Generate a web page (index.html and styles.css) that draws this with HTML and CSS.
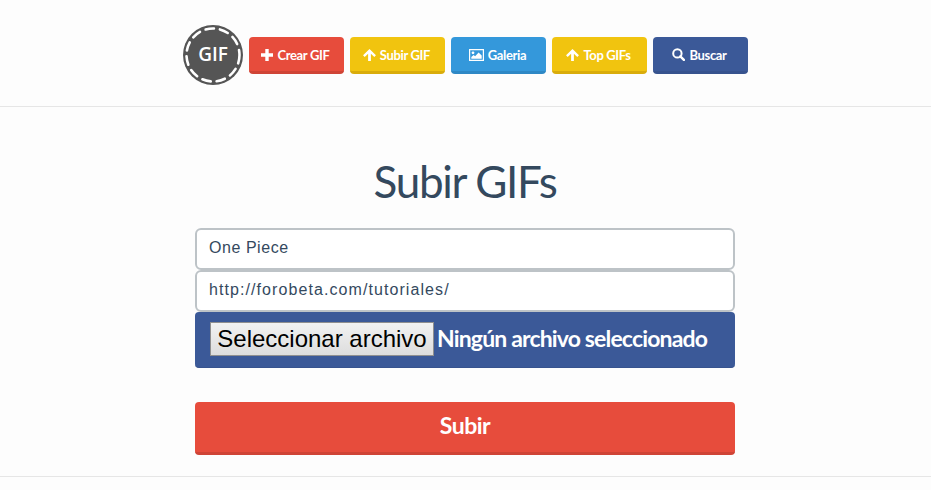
FILE: index.html
```html
<!DOCTYPE html>
<html lang="es">
<head>
<meta charset="utf-8">
<title>Subir GIFs</title>
<link rel="stylesheet" href="styles.css">
</head>
<body>
<header class="site-header">
  <svg class="logo" width="60" height="60" viewBox="0 0 60 60" role="img" aria-label="GIF">
    <circle cx="30" cy="30" r="30" fill="#555"/>
    <circle cx="30" cy="30" r="26.5" fill="none" stroke="#fff" stroke-width="2.6" stroke-linecap="round" stroke-dasharray="8.5 6.07"/>
    <text x="30" y="36" text-anchor="middle" class="logo-text">GIF</text>
  </svg>
  <nav class="nav">
    <a class="btn btn-red" href="#"><svg class="ico" viewBox="0 0 12 12"><path d="M4.3 0h3.4v4.3H12v3.4H7.700V12H4.300V7.700H0V4.300h4.300z"/></svg>Crear GIF</a>
    <a class="btn btn-yellow" href="#"><svg class="ico ico-up" viewBox="0 0 14 13"><path d="M7 0l7 6.800-1.800 1.800-3.700-3.500V13h-3V5.100L1.800 8.600 0 6.800z"/></svg>Subir GIF</a>
    <a class="btn btn-blue" href="#"><svg class="ico ico-pic" viewBox="0 0 15 12"><path fill-rule="evenodd" d="M0 0h15v12H0zM1.200 1.200v9.600h12.600V1.200z"/><circle cx="4" cy="3.800" r="1.400"/><path d="M2.300 9.800V8l2.300-2 1.500 1.300L9.600 3.500l3.100 3v3.300z"/></svg>Galeria</a>
    <a class="btn btn-yellow" href="#"><svg class="ico ico-up" viewBox="0 0 14 13"><path d="M7 0l7 6.800-1.800 1.800-3.700-3.500V13h-3V5.100L1.800 8.600 0 6.800z"/></svg>Top GIFs</a>
    <a class="btn btn-navy" href="#"><svg class="ico ico-search" viewBox="0 0 13 13"><circle cx="5.400" cy="5.400" r="4.200" fill="none" stroke="#fff" stroke-width="2"/><path d="M8.300 8.300l3.600 3.600" stroke="#fff" stroke-width="2.400" stroke-linecap="round"/></svg>Buscar</a>
  </nav>
</header>
<main class="content">
  <h1 class="title">Subir GIFs</h1>
  <form class="upload-form">
    <input class="field" type="text" value="One Piece">
    <input class="field field-url" type="text" value="http://forobeta.com/tutoriales/">
    <div class="file-row">
      <button class="file-btn" type="button">Seleccionar archivo</button>
      <span class="file-label">Ningún archivo seleccionado</span>
    </div>
    <button class="submit" type="button">Subir</button>
  </form>
</main>
<div class="footer-line"></div>
</body>
</html>
```
FILE: styles.css
```css
* { box-sizing: border-box; }
html, body { margin: 0; padding: 0; }
body {
  background: #fdfdfd;
  font-family: "Lato", "Open Sans", sans-serif;
  color: #34495e;
  height: 490px;
  overflow: hidden;
}
.site-header {
  height: 107px;
  border-bottom: 1px solid #e6e6e6;
  display: flex;
  justify-content: center;
  align-items: flex-start;
  gap: 6px;
  padding-top: 25px;
}
.logo { display: block; }
.logo-text {
  font-family: "Open Sans", sans-serif;
  font-size: 19px;
  font-weight: 600;
  fill: #fff;
}
.nav { display: flex; gap: 6px; margin-top: 12px; }
.btn {
  width: 95px;
  height: 37px;
  border-radius: 4px;
  border-bottom: 3px solid;
  display: flex;
  align-items: center;
  justify-content: center;
  gap: 4px;
  color: #fff;
  font-size: 13px;
  font-weight: 700;
  letter-spacing: -0.35px;
  text-decoration: none;
  padding-top: 1px;
  padding-right: 2px;
}
.btn-red { background: #e74c3c; border-color: #cf4436; }
.btn-yellow { background: #f1c40f; border-color: #d9ac0b; }
.btn-blue { background: #3498db; border-color: #2e88c5; }
.btn-navy { background: #3b5998; border-color: #37538e; }
.ico { width: 12px; height: 12px; fill: #fff; flex: none; }
.ico-up { width: 13px; height: 12px; }
.ico-pic { width: 15px; height: 12px; }
.ico-search { width: 13px; height: 13px; }
.content { display: flex; flex-direction: column; align-items: center; padding-right: 1px; }
.title {
  margin: 48px 0 0;
  height: 73px;
  font-size: 44px;
  line-height: 52px;
  font-weight: 400;
  letter-spacing: -1.3px;
  color: #34495e;
}
.upload-form { width: 540px; display: flex; flex-direction: column; }
.field {
  display: block;
  width: 100%;
  height: 42px;
  border: 2px solid #bdc3c7;
  border-radius: 6px;
  background: #fff;
  padding: 0 12px 2px;
  font-family: "Liberation Sans", Arial, sans-serif;
  font-size: 16px;
  letter-spacing: 0.55px;
  line-height: 36px;
  color: #34495e;
  outline: none;
}
.field-url { letter-spacing: 1.08px; }
.file-row {
  height: 56px;
  background: #3b5998;
  border-bottom: 1px solid #37538e;
  border-radius: 4px;
  padding: 10px 15px;
  display: flex;
  align-items: flex-start;
  gap: 4px;
  color: #fff;
}
.file-btn {
  flex: none;
  height: 34px;
  width: 224px;
  padding: 0;
  border: 1px solid #8f8f8f;
  background: linear-gradient(#f2f2f2, #dddddd);
  font-family: "Liberation Sans", Arial, sans-serif;
  font-size: 24px;
  line-height: 32px;
  white-space: nowrap;
  color: #000;
}
.file-label {
  font-size: 23px;
  line-height: 33px;
  font-weight: 700;
  letter-spacing: -0.84px;
  margin-left: -1px;
  white-space: nowrap;
}
.submit {
  margin-top: 34px;
  height: 53px;
  width: 100%;
  border: 0;
  border-bottom: 3px solid #cf4436;
  border-radius: 4px;
  background: #e74c3c;
  color: #fff;
  font-family: "Lato", "Open Sans", sans-serif;
  font-size: 23px;
  font-weight: 700;
  letter-spacing: -0.5px;
  padding-bottom: 5px;
}
.footer-line { margin-top: 21px; border-top: 1px solid #e6e6e6; }
```
